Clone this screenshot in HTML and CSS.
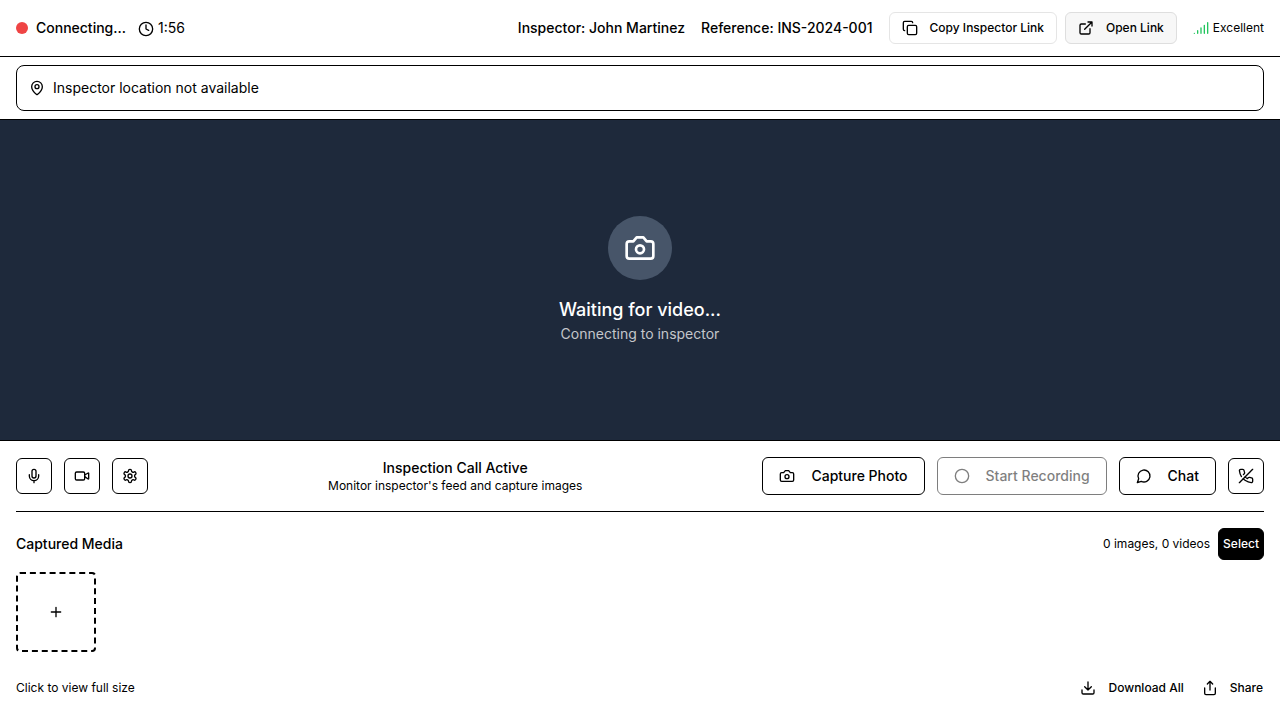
FILE: index.html
```html
<!DOCTYPE html>
<html lang="en">
<head>
<meta charset="utf-8">
<meta name="viewport" content="width=device-width, initial-scale=1">
<title>Inspection Call</title>
<link rel="stylesheet" href="styles.css">
</head>
<body>
<div class="app">
  <header class="topbar">
    <div class="status">
      <span class="status-dot"></span>
      <span class="strong">Connecting...</span>
      <span class="timer"><svg class="icon timer-icon" viewBox="0 0 24 24"><circle cx="12" cy="12" r="10"/><path d="M12 6v6l4 2"/></svg>1:56</span>
    </div>
    <div class="session">
      <span class="strong">Inspector: John Martinez</span>
      <span class="strong">Reference: INS-2024-001</span>
      <div class="link-actions">
        <button type="button" class="btn btn-small">
          <svg class="icon" viewBox="0 0 24 24"><rect x="8" y="8" width="14" height="14" rx="2"/><path d="M4 16c-1.100 0-2-.9-2-2V4c0-1.100.9-2 2-2h10c1.100 0 2 .9 2 2"/></svg>
          Copy Inspector Link
        </button>
        <button type="button" class="btn btn-small btn-tinted">
          <svg class="icon" viewBox="0 0 24 24"><path d="M15 3h6v6M10 14 21 3M18 13v6a2 2 0 0 1-2 2H5a2 2 0 0 1-2-2V8a2 2 0 0 1 2-2h6"/></svg>
          Open Link
        </button>
      </div>
      <div class="signal">
        <svg class="icon signal-icon" viewBox="0 0 24 24"><path d="M2 20h.01M7 20v-4M12 20v-8M17 20V8M22 4v16"/></svg>
        <span>Excellent</span>
      </div>
    </div>
  </header>

  <section class="location">
    <div class="location-box">
      <svg class="icon" viewBox="0 0 24 24"><path d="M20 10c0 4.993-5.539 10.193-7.399 11.799a1 1 0 0 1-1.202 0C9.539 20.193 4 14.993 4 10a8 8 0 0 1 16 0"/><circle cx="12" cy="10" r="3"/></svg>
      <span>Inspector location not available</span>
    </div>
  </section>

  <main class="video">
    <div class="video-badge">
      <svg class="icon icon-large" viewBox="0 0 24 24"><path d="M14.500 4h-5L7 7H4a2 2 0 0 0-2 2v9a2 2 0 0 0 2 2h16a2 2 0 0 0 2-2V9a2 2 0 0 0-2-2h-3l-2.500-3z"/><circle cx="12" cy="13" r="3"/></svg>
    </div>
    <p class="video-title">Waiting for video...</p>
    <p class="video-note">Connecting to inspector</p>
  </main>

  <div class="panel">
    <section class="controls">
      <div class="button-row">
        <button type="button" class="btn btn-square" aria-label="Microphone">
          <svg class="icon" viewBox="0 0 24 24"><path d="M12 2a3 3 0 0 0-3 3v7a3 3 0 0 0 6 0V5a3 3 0 0 0-3-3Z"/><path d="M19 10v2a7 7 0 0 1-14 0v-2M12 19v3"/></svg>
        </button>
        <button type="button" class="btn btn-square" aria-label="Camera">
          <svg class="icon" viewBox="0 0 24 24"><path d="m16 13 5.223 3.482a.5.5 0 0 0 .777-.416V7.870a.5.5 0 0 0-.752-.432L16 10.500"/><rect x="2" y="6" width="14" height="12" rx="2"/></svg>
        </button>
        <button type="button" class="btn btn-square" aria-label="Settings">
          <svg class="icon" viewBox="0 0 24 24"><path d="M12.220 2h-.44a2 2 0 0 0-2 2v.18a2 2 0 0 1-1 1.730l-.43.25a2 2 0 0 1-2 0l-.15-.08a2 2 0 0 0-2.730.73l-.22.38a2 2 0 0 0 .73 2.730l.15.1a2 2 0 0 1 1 1.720v.51a2 2 0 0 1-1 1.740l-.15.09a2 2 0 0 0-.73 2.730l.22.38a2 2 0 0 0 2.730.73l.15-.08a2 2 0 0 1 2 0l.43.25a2 2 0 0 1 1 1.730V20a2 2 0 0 0 2 2h.44a2 2 0 0 0 2-2v-.18a2 2 0 0 1 1-1.730l.43-.25a2 2 0 0 1 2 0l.15.08a2 2 0 0 0 2.730-.73l.22-.39a2 2 0 0 0-.73-2.730l-.15-.08a2 2 0 0 1-1-1.740v-.5a2 2 0 0 1 1-1.740l.15-.09a2 2 0 0 0 .73-2.730l-.22-.38a2 2 0 0 0-2.730-.73l-.15.08a2 2 0 0 1-2 0l-.43-.25a2 2 0 0 1-1-1.730V4a2 2 0 0 0-2-2z"/><circle cx="12" cy="12" r="3"/></svg>
        </button>
      </div>
      <div class="call-info">
        <h2 class="heading">Inspection Call Active</h2>
        <p class="caption">Monitor inspector's feed and capture images</p>
      </div>
      <div class="button-row">
        <button type="button" class="btn btn-action">
          <svg class="icon" viewBox="0 0 24 24"><path d="M14.500 4h-5L7 7H4a2 2 0 0 0-2 2v9a2 2 0 0 0 2 2h16a2 2 0 0 0 2-2V9a2 2 0 0 0-2-2h-3l-2.500-3z"/><circle cx="12" cy="13" r="3"/></svg>
          Capture Photo
        </button>
        <button type="button" class="btn btn-action" disabled>
          <svg class="icon" viewBox="0 0 24 24"><circle cx="12" cy="12" r="10"/></svg>
          Start Recording
        </button>
        <button type="button" class="btn btn-action">
          <svg class="icon" viewBox="0 0 24 24"><path d="M7.900 20A9 9 0 1 0 4 16.100L2 22Z"/></svg>
          Chat
        </button>
        <button type="button" class="btn btn-square" aria-label="End call">
          <svg class="icon" viewBox="0 0 24 24"><path d="M10.680 13.310a16 16 0 0 0 3.410 2.600l1.270-1.270a2 2 0 0 1 2.110-.45 12.840 12.840 0 0 0 2.810.7 2 2 0 0 1 1.720 2v3a2 2 0 0 1-2.180 2 19.790 19.790 0 0 1-8.630-3.070 19.420 19.420 0 0 1-3.330-2.670m-2.670-3.340a19.790 19.790 0 0 1-3.070-8.630A2 2 0 0 1 4.110 2h3a2 2 0 0 1 2 1.720 12.840 12.840 0 0 0 .7 2.810 2 2 0 0 1-.45 2.110L8.090 9.910"/><path d="M22 2 2 22"/></svg>
        </button>
      </div>
    </section>

    <section class="media">
      <div class="row">
        <h2 class="heading">Captured Media</h2>
        <div class="media-tools">
          <span class="caption">0 images, 0 videos</span>
          <button type="button" class="btn btn-select">Select</button>
        </div>
      </div>
      <button type="button" class="add-tile" aria-label="Add media">
        <svg class="icon" viewBox="0 0 24 24"><path d="M5 12h14M12 5v14"/></svg>
      </button>
      <div class="row media-footer">
        <span class="caption">Click to view full size</span>
        <div class="export">
          <button type="button" class="btn btn-plain">
            <svg class="icon" viewBox="0 0 24 24"><path d="M21 15v4a2 2 0 0 1-2 2H5a2 2 0 0 1-2-2v-4M7 10l5 5 5-5M12 15V3"/></svg>
            Download All
          </button>
          <button type="button" class="btn btn-plain">
            <svg class="icon" viewBox="0 0 24 24"><path d="M4 12v8a2 2 0 0 0 2 2h12a2 2 0 0 0 2-2v-8M16 6l-4-4-4 4M12 2v13"/></svg>
            Share
          </button>
        </div>
      </div>
    </section>
  </div>
</div>
</body>
</html>
```
FILE: styles.css
```css
* {
  box-sizing: border-box;
}

body {
  margin: 0;
  background: #fff;
  color: #000;
  font: 14px/20px Inter, "Liberation Sans", sans-serif;
}

h2,
p {
  margin: 0;
}

.app {
  display: flex;
  flex-direction: column;
  min-height: 100vh;
}

.icon {
  flex: none;
  display: block;
  width: 16px;
  height: 16px;
  fill: none;
  stroke: currentColor;
  stroke-width: 2;
  stroke-linecap: round;
  stroke-linejoin: round;
}

.icon-large {
  width: 32px;
  height: 32px;
}

.strong {
  font-weight: 500;
}

.heading {
  font-size: 14px;
  font-weight: 500;
  line-height: 20px;
}

.caption {
  font-size: 12px;
  line-height: 16px;
}

/* Buttons */

.btn {
  display: inline-flex;
  align-items: center;
  justify-content: center;
  border: 1px solid #000;
  border-radius: 6px;
  background: #fff;
  color: #000;
  font: inherit;
  font-weight: 500;
  white-space: nowrap;
  cursor: pointer;
}

.btn:disabled {
  opacity: 0.5;
  cursor: default;
}

.btn-small {
  gap: 12px;
  height: 32px;
  padding: 0 12px;
  border-color: #e5e5e5;
  font-size: 12px;
}

.btn-tinted {
  border-color: #dedede;
  background: #f7f7f7;
}

.btn-square {
  width: 36px;
  height: 36px;
  padding: 0;
}

.btn-action {
  gap: 16px;
  height: 38px;
  padding: 0 16px;
}

.btn-select {
  height: 32px;
  padding: 0 4px;
  background: #000;
  color: #fff;
  font-size: 12px;
}

.btn-plain {
  gap: 12px;
  height: 32px;
  padding: 0;
  border-color: transparent;
  background: transparent;
  font-size: 12px;
}

/* Top bar */

.topbar {
  display: flex;
  align-items: center;
  justify-content: space-between;
  padding: 12px 16px;
  border-bottom: 1px solid #000;
}

.status,
.link-actions {
  display: flex;
  align-items: center;
  gap: 8px;
}

.status-dot {
  width: 12px;
  height: 12px;
  border-radius: 50%;
  background: #ef4444;
}

.timer {
  padding-left: 4px;
}

.timer-icon {
  display: inline-block;
  margin-right: 4px;
  vertical-align: middle;
}

.session {
  display: flex;
  align-items: center;
  gap: 16px;
}

.signal {
  display: flex;
  align-items: center;
  gap: 4px;
  font-size: 12px;
}

.signal-icon {
  color: #22c55e;
}

/* Location */

.location {
  padding: 8px 16px;
  border-bottom: 1px solid #000;
}

.location-box {
  display: flex;
  align-items: center;
  gap: 8px;
  padding: 12px;
  border: 1px solid #000;
  border-radius: 8px;
}

/* Video */

.video {
  flex: 1;
  display: flex;
  flex-direction: column;
  align-items: center;
  justify-content: center;
  background: #1e293b;
  color: #fff;
}

.video-badge {
  display: grid;
  place-items: center;
  width: 64px;
  height: 64px;
  margin-bottom: 16px;
  border-radius: 50%;
  background: #475569;
}

.video-title {
  font-size: 18px;
  font-weight: 500;
  line-height: 28px;
}

.video-note {
  color: #c4c6ca;
}

/* Bottom panel */

.panel {
  padding: 0 16px 16px;
  border-top: 1px solid #000;
}

.controls {
  display: flex;
  align-items: center;
  justify-content: space-between;
  padding: 16px 0;
  border-bottom: 1px solid #000;
}

.button-row {
  display: flex;
  align-items: center;
  gap: 12px;
}

.call-info {
  text-align: center;
}

.media {
  display: flex;
  flex-direction: column;
  gap: 12px;
  padding-top: 16px;
}

.row {
  display: flex;
  align-items: center;
  justify-content: space-between;
}

.media-tools {
  display: flex;
  align-items: center;
  gap: 8px;
}

.add-tile {
  display: grid;
  place-items: center;
  width: 80px;
  height: 80px;
  padding: 0;
  border: 2px dashed #000;
  border-radius: 4px;
  background: transparent;
  color: #000;
  cursor: pointer;
}

.media-footer {
  padding-top: 8px;
}

.export {
  display: flex;
  gap: 16px;
}
```
